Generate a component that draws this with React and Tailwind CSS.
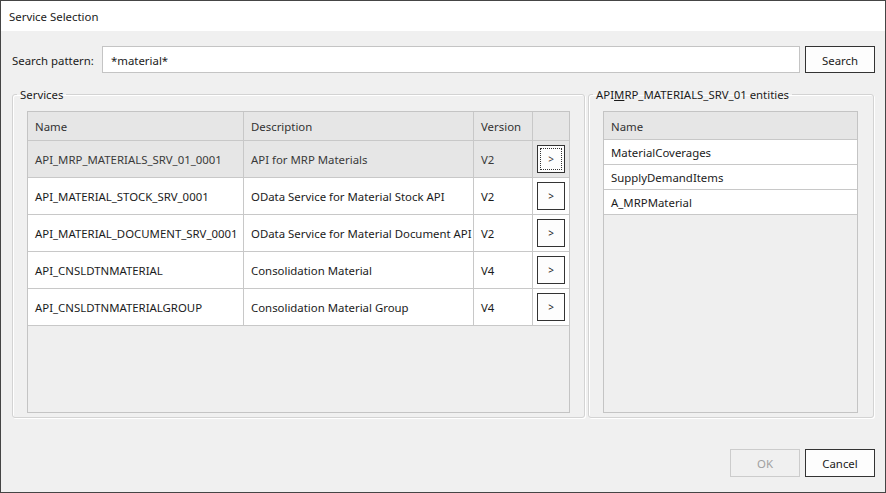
import { Fragment } from 'react'

const services = [
  { name: 'API_MRP_MATERIALS_SRV_01_0001', desc: 'API for MRP Materials', ver: 'V2', selected: true },
  { name: 'API_MATERIAL_STOCK_SRV_0001', desc: 'OData Service for Material Stock API', ver: 'V2' },
  { name: 'API_MATERIAL_DOCUMENT_SRV_0001', desc: 'OData Service for Material Document API', ver: 'V2' },
  { name: 'API_CNSLDTNMATERIAL', desc: 'Consolidation Material', ver: 'V4' },
  { name: 'API_CNSLDTNMATERIALGROUP', desc: 'Consolidation Material Group', ver: 'V4' },
]

const entities = ['MaterialCoverages', 'SupplyDemandItems', 'A_MRPMaterial']

const font = { fontFamily: '"Noto Sans", "Open Sans", sans-serif' }

const GroupBox = ({ legend, className, children }) => (
  <fieldset className={`border border-[#d3d3d3] rounded-[3px] p-0 shadow-[1px_1px_0_#ffffff,inset_1px_1px_0_#ffffff] ${className}`}>
    <legend className="ml-[4px] px-[3px] text-[11.4px] leading-[16px] pt-[1px] text-[#1b1b1b]">{legend}</legend>
    {children}
  </fieldset>
)

const Cell = ({ w, className = '', children }) => (
  <div className={`h-full flex items-center pl-[7px] pt-[2px] border-r border-[#c8c8c8] overflow-hidden whitespace-nowrap shrink-0 ${className}`} style={{ width: w }}>
    {children}
  </div>
)

export default function App() {
  return (
    <div className="w-[886px] h-[493px] flex flex-col border border-[#454545] bg-[#f0f0f0] text-[11.4px] text-[#1b1b1b]" style={font}>
      <div className="h-[30px] bg-white flex items-center pl-[8px] pt-[2px] shrink-0">Service Selection</div>

      <div className="flex flex-col flex-1 pl-[11px] pr-[10px]">
        <div className="flex items-center mt-[15px] h-[27px]">
          <span className="w-[90px] shrink-0 pt-[2px]">Search pattern:</span>
          <div className="flex-1 h-full bg-white border border-[#c4c4c4] flex items-center pl-[8px] pt-[2px]">*material*</div>
          <button className="ml-[5px] w-[70px] h-full bg-[#fdfdfd] border border-[#333333] pt-[2px]">Search</button>
        </div>

        <div className="flex mt-[13px] gap-[3px] pr-[1px]">
          <GroupBox legend="Services" className="w-[573px] shrink-0">
            <div className="pl-[14px] pr-[14px] pt-[8px] pb-[4px]">
              <div className="h-[302px] border border-[#c4c4c4] bg-[#efefef]">
                <div className="flex h-[29px] bg-[#e6e6e6] border-b border-[#c8c8c8] text-[#333333]">
                  <Cell w={216}>Name</Cell>
                  <Cell w={230}>Description</Cell>
                  <Cell w={59}>Version</Cell>
                  <div className="flex-1" />
                </div>
                {services.map((s, i) => (
                  <div key={s.name} className={`flex h-[37px] border-b border-[#c8c8c8] ${s.selected ? 'bg-[#e6e6e6] text-[#3a3a3a]' : 'bg-white'}`}>
                    <Cell w={216}>{s.name}</Cell>
                    <Cell w={230}>{s.desc}</Cell>
                    <Cell w={59}>{s.ver}</Cell>
                    <div className="flex-1 flex items-center pl-[4px]">
                      <button className="w-[28px] h-[28px] bg-[#fdfdfd] border border-[#333333] flex items-center justify-center p-[2px]">
                        <span className={`w-full h-full flex items-center justify-center text-[10px] ${i === 0 ? 'border border-dotted border-[#333333]' : ''}`}>&gt;</span>
                      </button>
                    </div>
                  </div>
                ))}
              </div>
            </div>
          </GroupBox>

          <GroupBox legend={<Fragment>API<span className="underline">M</span>RP_MATERIALS_SRV_01 entities</Fragment>} className="flex-1">
            <div className="pl-[14px] pr-[15px] pt-[8px] pb-[4px]">
              <div className="h-[302px] border border-[#c4c4c4] bg-[#efefef]">
                <div className="flex items-center h-[28px] bg-[#e6e6e6] border-b border-[#c8c8c8] pl-[7px] pt-[2px] text-[#333333]">Name</div>
                {entities.map(e => (
                  <div key={e} className="flex items-center h-[25px] bg-white border-b border-[#c8c8c8] pl-[7px] pt-[1px]">{e}</div>
                ))}
              </div>
            </div>
          </GroupBox>
        </div>

        <div className="flex justify-end gap-[5px] mt-[31px]">
          <button className="w-[70px] h-[28px] border border-[#cccccc] bg-[#f0f0f0] text-[#a0a0a0] pt-[2px]">OK</button>
          <button className="w-[70px] h-[28px] border border-[#333333] bg-[#fdfdfd] pt-[2px]">Cancel</button>
        </div>
      </div>
    </div>
  )
}
